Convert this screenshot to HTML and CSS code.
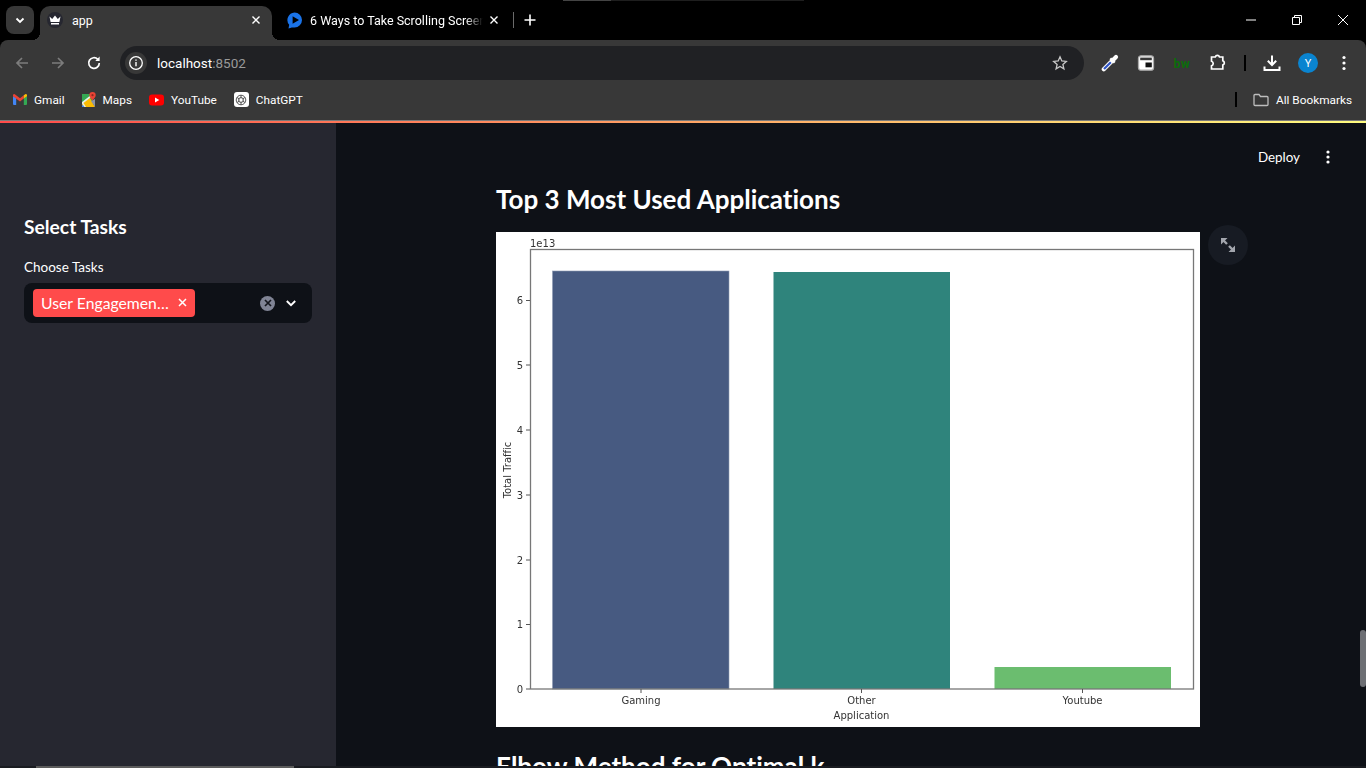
FILE: index.html
```html
<!DOCTYPE html>
<html lang="en">
<head>
    <meta charset="UTF-8">
    <meta name="viewport" content="width=device-width, initial-scale=1.0">
    <title>app</title>
    <link rel="stylesheet" href="styles.css">
</head>
<body>

    <div class="top-edge"></div>

    <div class="tabstrip">
        <button class="tab-search">
            <svg width="12" height="12" viewBox="0 0 12 12"><path d="M2.5 4.5 6 8l3.5-3.5" fill="none" stroke="#fff" stroke-width="1.8"/></svg>
        </button>
        <div class="tab tab-active">
            <span class="favicon-crown">
                <svg width="12" height="10" viewBox="0 0 12 10"><path d="M0.5 1.5 3.2 4 6 0.5 8.8 4l2.7-2.5L10.4 7H1.6zM2 8h8v1.4H2z" fill="#fff"/></svg>
            </span>
            <span class="tab-title">app</span>
            <svg class="tab-close" width="10" height="10" viewBox="0 0 10 10"><path d="M1.5 1.5l7 7M8.5 1.5l-7 7" stroke="#fff" stroke-width="1.4"/></svg>
        </div>
        <div class="tab tab-other">
            <svg width="16" height="17" viewBox="0 0 16 17"><path d="M7.500 0.500a7.500 7.500 0 0 1 0 15H4.800L1.500 16.500 2.200 12.800A7.500 7.500 0 0 1 7.500 0.500z" fill="#1a73e8"/><path d="M5.600 4.200 12 8l-6.400 3.800z" fill="#000"/></svg>
            <span class="tab-title tab-title-fade">6 Ways to Take Scrolling Screenshots</span>
            <svg class="tab-close" width="10" height="10" viewBox="0 0 10 10"><path d="M1.5 1.5l7 7M8.5 1.5l-7 7" stroke="#fff" stroke-width="1.4"/></svg>
        </div>
        <span class="tab-sep"></span>
        <svg class="tab-new" width="12" height="12" viewBox="0 0 12 12"><path d="M6 0.500v11M0.500 6h11" stroke="#fff" stroke-width="1.600"/></svg>
        <div class="window-controls">
            <svg width="12" height="12" viewBox="0 0 12 12"><path d="M1 6h10" stroke="#fff" stroke-width="1"/></svg>
            <svg width="12" height="12" viewBox="0 0 12 12"><path d="M1.500 3.500h7v7h-7zM3.500 3.500v-2h7v7h-2" fill="none" stroke="#fff"/></svg>
            <svg width="12" height="12" viewBox="0 0 12 12"><path d="M1 1l10 10M11 1L1 11" stroke="#fff"/></svg>
        </div>
    </div>

    <div class="toolbar">
        <svg class="nav-icon" width="16" height="16" viewBox="0 0 16 16"><path d="M14 8H3M8 3 3 8l5 5" fill="none" stroke="#7c7c7c" stroke-width="1.700"/></svg>
        <svg class="nav-icon" width="16" height="16" viewBox="0 0 16 16"><path d="M2 8h11M8 3l5 5-5 5" fill="none" stroke="#7c7c7c" stroke-width="1.700"/></svg>
        <svg class="nav-icon" width="16" height="16" viewBox="0 0 16 16"><path d="M13.300 8a5.300 5.300 0 1 1-1.500-3.700" fill="none" stroke="#fff" stroke-width="1.700"/><path d="M13.600 1.600v4.300H9.300z" fill="#fff"/></svg>
        <div class="omnibox">
            <span class="site-info">
                <svg width="16" height="16" viewBox="0 0 16 16"><circle cx="8" cy="8" r="6.300" fill="none" stroke="#fff" stroke-width="1.300"/><path d="M8 7v4.300M8 4.400v1.400" stroke="#fff" stroke-width="1.400"/></svg>
            </span>
            <span class="url">localhost<span class="url-port">:8502</span></span>
            <svg class="star" width="16" height="16" viewBox="0 0 16 16"><path d="M8 1.800l1.800 4.200 4.500 0.400-3.400 3 1 4.400L8 11.500l-3.900 2.300 1-4.400-3.400-3 4.500-0.400z" fill="none" stroke="#c8c8c8" stroke-width="1.300"/></svg>
        </div>
        <div class="toolbar-icons">
            <svg width="18" height="18" viewBox="0 0 18 18"><path d="M2.800 15.200 10 8" stroke="#fff" stroke-width="4.200" stroke-linecap="round"/><path d="M3 15 9.800 8.200" stroke="#2f55c8" stroke-width="2.200"/><path d="M9.300 4.300l4.400 4.400" stroke="#fff" stroke-width="2.400"/><path d="M11.800 6.200 15 3" stroke="#fff" stroke-width="4.200" stroke-linecap="round"/></svg>
            <svg width="18" height="16" viewBox="0 0 18 16"><rect x="1.500" y="0.800" width="15" height="14.400" rx="2.500" fill="#fff" stroke="#aaa" stroke-width="1.300"/><rect x="3.200" y="2.600" width="11.600" height="2.600" fill="#383838"/><rect x="8.500" y="7.500" width="6.300" height="4.800" fill="#111"/></svg>
            <span class="ext-bw">bw</span>
            <svg width="18" height="18" viewBox="0 0 18 18"><path d="M2.500 3h3.800a2.200 2.200 0 0 1 4.200 0h3.300v3.800a2.200 2.200 0 0 1 0 4.200v4H2.500v-3.200a2.400 2.400 0 0 0 0-4.600z" fill="none" stroke="#fff" stroke-width="1.700"/></svg>
            <span class="toolbar-sep"></span>
            <svg width="18" height="18" viewBox="0 0 18 18"><path d="M9 1.500v9M4.800 6.800 9 11l4.200-4.200" fill="none" stroke="#fff" stroke-width="2"/><path d="M1.500 12.500v3.500h15v-3.500" fill="none" stroke="#fff" stroke-width="2"/></svg>
            <span class="avatar">Y</span>
            <svg class="toolbar-menu" width="4" height="16" viewBox="0 0 4 16"><circle cx="2" cy="2.500" r="1.600" fill="#fff"/><circle cx="2" cy="8" r="1.600" fill="#fff"/><circle cx="2" cy="13.500" r="1.600" fill="#fff"/></svg>
        </div>
    </div>

    <div class="bookmarks">
        <a class="bookmark">
            <svg width="14" height="11" viewBox="0 0 14 11"><path d="M0 2v8a1 1 0 0 0 1 1h2.200V4z" fill="#4285f4"/><path d="M14 2v8a1 1 0 0 1-1 1h-2.200V4z" fill="#34a853"/><path d="M0 1.300A1.100 1.100 0 0 1 1.800 0.300L7 4.200l3.800-2.900V4.500L7 7.400 0 2.200z" fill="#ea4335"/><path d="M10.800 1.300l1.400-1a1.100 1.100 0 0 1 1.800 1v0.900L10.800 4.500z" fill="#fbbc04"/></svg>
            Gmail
        </a>
        <a class="bookmark">
            <svg width="14" height="15" viewBox="0 0 14 15"><path d="M0 2h10v13H0z" fill="#34a853"/><path d="M0 15V11L8 6l5 9z" fill="#fbbc04"/><path d="M0 15 3 15 0 12.500z" fill="#4285f4"/><path d="M9 9l4-2v8H13z" fill="#8a94a8"/><path d="M0 10 9 3l1 1.500L1.500 11 4 15H2.500L0 11.500z" fill="#e8f0e8"/><path d="M10.500 0a3.200 3.200 0 0 1 3.200 3.200c0 2.100-2 3.500-3.200 5.300C9.300 6.700 7.300 5.300 7.300 3.200A3.200 3.200 0 0 1 10.500 0z" fill="#ea4335"/><circle cx="10.500" cy="3.200" r="1.100" fill="#8c2a20"/></svg>
            Maps
        </a>
        <a class="bookmark">
            <svg width="15" height="12" viewBox="0 0 15 12"><rect width="15" height="11" y="0.500" rx="3" fill="#f00"/><path d="M6 3.500v5L10.300 6z" fill="#fff"/></svg>
            YouTube
        </a>
        <a class="bookmark">
            <span class="gpt-icon">
                <svg width="12" height="12" viewBox="0 0 12 12" fill="none" stroke="#555" stroke-width="1"><circle cx="6" cy="6" r="4.800"/><circle cx="6" cy="6" r="2.400"/><path d="M6 1.200v3M10 3.500 7.500 5M10 8.500 7.500 7M6 10.800v-3M2 8.500 4.500 7M2 3.500 4.500 5"/></svg>
            </span>
            ChatGPT
        </a>
        <span class="bookmarks-sep"></span>
        <a class="bookmark all-bookmarks">
            <svg width="16" height="14" viewBox="0 0 16 14"><path d="M1 2.500a1 1 0 0 1 1-1h4l1.500 2H14a1 1 0 0 1 1 1V11.500a1 1 0 0 1-1 1H2a1 1 0 0 1-1-1z" fill="none" stroke="#bdbdbd" stroke-width="1.300"/></svg>
            All Bookmarks
        </a>
    </div>

    <div class="chrome-line"></div>
    <div class="decoration"></div>

    <div class="app">
        <aside class="sidebar">
            <h3 class="sidebar-title">Select Tasks</h3>
            <label class="field-label">Choose Tasks</label>
            <div class="multiselect">
                <span class="chip">
                    <span class="chip-text">User Engagemen…</span>
                    <svg width="9" height="9" viewBox="0 0 9 9"><path d="M1 1l7 7M8 1 1 8" stroke="#fff" stroke-width="1.500"/></svg>
                </span>
                <span class="clear-all">
                    <svg width="8" height="8" viewBox="0 0 8 8"><path d="M1 1l6 6M7 1 1 7" stroke="#14161d" stroke-width="1.700"/></svg>
                </span>
                <svg class="chevron" width="12" height="12" viewBox="0 0 12 12"><path d="M1.800 4 6 8.200 10.200 4" fill="none" stroke="#fff" stroke-width="1.900"/></svg>
            </div>
        </aside>

        <main class="main">
            <div class="app-header">
                <span class="deploy">Deploy</span>
                <svg width="4" height="14" viewBox="0 0 4 14"><circle cx="2" cy="2" r="1.600" fill="#fff"/><circle cx="2" cy="7" r="1.600" fill="#fff"/><circle cx="2" cy="12" r="1.600" fill="#fff"/></svg>
            </div>

            <div class="block-container">
                <h2 class="section-title">Top 3 Most Used Applications</h2>
                <div class="chart-wrap">
                    <svg class="chart" width="704" height="495" viewBox="0 0 704 495">
                        <rect width="704" height="495" fill="#fff"/>
                        <rect x="56.500" y="39" width="176.500" height="418" fill="#475a81" stroke="#8e9ab3" stroke-width=".6"/>
                        <rect x="277.500" y="40" width="176.500" height="417" fill="#2f847c"/>
                        <rect x="498.500" y="435" width="176.500" height="22" fill="#6bbd6f"/>
                        <rect x="34.500" y="17.500" width="663" height="439.500" fill="none" stroke="#777" stroke-width="1.300"/>
                        <g stroke="#555" stroke-width="1">
                            <path d="M30 457h4M30 392.500h4M30 328h4M30 263h4M30 198h4M30 133h4M30 68.500h4"/>
                            <path d="M145 457v4M365.500 457v4M586.500 457v4"/>
                        </g>
                        <g class="chart-text">
                            <text x="34" y="15">1e13</text>
                            <text x="27" y="461" text-anchor="end">0</text>
                            <text x="27" y="396" text-anchor="end">1</text>
                            <text x="27" y="332" text-anchor="end">2</text>
                            <text x="27" y="267" text-anchor="end">3</text>
                            <text x="27" y="202" text-anchor="end">4</text>
                            <text x="27" y="137" text-anchor="end">5</text>
                            <text x="27" y="72" text-anchor="end">6</text>
                            <text x="145" y="472" text-anchor="middle">Gaming</text>
                            <text x="365.500" y="472" text-anchor="middle">Other</text>
                            <text x="586.500" y="472" text-anchor="middle">Youtube</text>
                            <text x="365.500" y="486.500" text-anchor="middle">Application</text>
                            <text transform="translate(14.500 238) rotate(-90)" text-anchor="middle">Total Traffic</text>
                        </g>
                    </svg>
                    <span class="fullscreen-btn">
                        <svg width="16" height="16" viewBox="0 0 16 16"><path d="M1 1h6.500L1 7.500zM15 15H8.500L15 8.500z" fill="#a3a6ad"/><path d="M3 3l4 4M13 13 9 9" stroke="#a3a6ad" stroke-width="2.400"/></svg>
                    </span>
                </div>
                <h2 class="section-title section-title-next">Elbow Method for Optimal k</h2>
            </div>

            <div class="scrollbar-thumb"></div>
        </main>
    </div>

    <div class="bottom-edge"><span class="bottom-edge-bar"></span></div>

</body>
</html>
```

FILE: styles.css
```css
html, body {
    margin: 0;
    height: 768px;
    overflow: hidden;
    background: #000;
}
body {
    font-family: Roboto, "Liberation Sans", sans-serif;
    color: #fff;
    display: flex;
    flex-direction: column;
    position: relative;
}
svg {
    display: block;
    flex: none;
}
.top-edge {
    position: absolute;
    top: 0;
    left: 563px;
    width: 241px;
    height: 1px;
    background: linear-gradient(90deg, #444 48px, #1e1e1e 48px);
}

/* browser tabs */
.tabstrip {
    height: 40px;
    display: flex;
    align-items: center;
    padding-left: 6px;
    flex: none;
}
.tab-search {
    width: 28px;
    height: 28px;
    border: none;
    border-radius: 8px;
    background: #383838;
    display: flex;
    align-items: center;
    justify-content: center;
    padding: 0;
    margin-right: 6px;
}
.tab {
    height: 34px;
    margin-top: 6px;
    padding: 0 0 6px 7px;
    display: flex;
    align-items: center;
    font-size: 12.500px;
    gap: 8px;
    box-sizing: border-box;
}
.tab-other {
    width: 238px;
    padding-left: 15px;
    gap: 6px;
}
.tab-active {
    width: 232px;
    background: #383838;
    border-radius: 10px 10px 0 0;
    position: relative;
}
.tab-active::before,
.tab-active::after {
    content: "";
    position: absolute;
    bottom: 0;
    width: 8px;
    height: 8px;
}
.tab-active::before {
    left: -8px;
    background: radial-gradient(circle at 0 0, transparent 8px, #383838 8px);
}
.tab-active::after {
    right: -8px;
    background: radial-gradient(circle at 100% 0, transparent 8px, #383838 8px);
}
.favicon-crown {
    width: 16px;
    height: 16px;
    border-radius: 50%;
    background: #262730;
    display: flex;
    align-items: center;
    justify-content: center;
}
.tab-title {
    flex: 1;
    white-space: nowrap;
    overflow: hidden;
    padding-left: 1px;
}
.tab-title-fade {
    -webkit-mask-image: linear-gradient(90deg, #000 90%, transparent);
    mask-image: linear-gradient(90deg, #000 90%, transparent);
}
.tab-close {
    margin-right: 11px;
}
.tab-sep {
    width: 1px;
    height: 16px;
    background: #6a6a6a;
    margin-left: 3px;
}
.tab-new {
    margin-left: 10px;
}
.window-controls {
    margin-left: auto;
    display: flex;
    gap: 34px;
    padding-right: 17px;
}

/* toolbar */
.toolbar {
    height: 46px;
    background: #383838;
    border-radius: 8px 8px 0 0;
    display: flex;
    align-items: center;
    padding-left: 14px;
    flex: none;
}
.nav-icon {
    margin-right: 20px;
}
.omnibox {
    width: 964px;
    height: 34px;
    margin-left: -2px;
    background: #202124;
    border-radius: 17px;
    display: flex;
    align-items: center;
    padding: 0 16px 0 5px;
    box-sizing: border-box;
}
.site-info {
    width: 22px;
    height: 22px;
    border-radius: 50%;
    background: #383838;
    display: flex;
    align-items: center;
    justify-content: center;
    margin-right: 10px;
}
.url {
    font-size: 13.500px;
    flex: 1;
}
.url-port {
    color: #9a9a9a;
}
.toolbar-icons {
    display: flex;
    align-items: center;
    gap: 18px;
    margin-left: 17px;
}
.ext-bw {
    width: 18px;
    padding-top: 1px;
    color: #0a6e0a;
    font-weight: 700;
    font-size: 12px;
    letter-spacing: .5px;
    text-align: center;
}
.toolbar-sep {
    width: 2px;
    height: 16px;
    background: #000;
    margin: 0 -1px;
}
.avatar {
    width: 20px;
    height: 20px;
    border-radius: 50%;
    background: #0a84d0;
    font-size: 11px;
    display: flex;
    align-items: center;
    justify-content: center;
    margin-left: -1px;
}
.toolbar-menu {
    margin-left: 6px;
}

/* bookmarks */
.bookmarks {
    height: 34px;
    padding: 0 0 7px 13px;
    box-sizing: border-box;
    background: #383838;
    display: flex;
    align-items: center;
    flex: none;
    font-size: 11.800px;
}
.bookmark {
    display: flex;
    align-items: center;
    gap: 7px;
    margin-right: 17px;
}
.gpt-icon {
    width: 15px;
    height: 15px;
    border-radius: 3px;
    background: #fff;
    display: flex;
    align-items: center;
    justify-content: center;
}
.bookmarks-sep {
    width: 2px;
    height: 15px;
    background: #000;
    margin-left: auto;
    margin-right: 16px;
}
.all-bookmarks {
    margin-right: 14px;
}
.chrome-line {
    height: 1px;
    background: #7a7a7a;
    flex: none;
}
.decoration {
    height: 2px;
    background: linear-gradient(90deg, #ff4b4b, #fffd80);
    flex: none;
}

/* streamlit app */
.app {
    flex: 1;
    display: flex;
    min-height: 0;
    font-family: Lato, "Noto Sans", sans-serif;
    font-variant-ligatures: none;
}
.sidebar {
    width: 336px;
    background: #262730;
    padding: 92px 24px 0;
    box-sizing: border-box;
    flex: none;
}
.sidebar-title {
    margin: 0 0 19px;
    font-size: 19.250px;
    font-weight: 700;
    line-height: 24px;
}
.field-label {
    display: block;
    font-size: 13.500px;
    line-height: 18px;
    margin-bottom: 7px;
}
.multiselect {
    height: 40px;
    background: #0e1117;
    border-radius: 8px;
    display: flex;
    align-items: center;
    padding: 0 15px 0 9px;
}
.chip {
    height: 28px;
    width: 162px;
    box-sizing: border-box;
    background: #ff4b4b;
    border-radius: 4px;
    display: flex;
    align-items: center;
    justify-content: space-between;
    padding: 0 8px 1px;
    font-size: 15.750px;
}
.clear-all {
    width: 15px;
    height: 15px;
    border-radius: 50%;
    background: #808495;
    margin-left: auto;
    margin-right: 10px;
    display: flex;
    align-items: center;
    justify-content: center;
}
.main {
    flex: 1;
    background: #0e1117;
    position: relative;
    overflow: hidden;
}
.app-header {
    position: absolute;
    top: 26px;
    right: 36px;
    display: flex;
    align-items: center;
    gap: 26px;
    font-size: 13.400px;
}
.block-container {
    width: 704px;
    margin-left: 160px;
    padding-top: 58px;
}
.section-title {
    margin: 0;
    font-size: 26px;
    line-height: 36px;
    font-weight: 700;
    white-space: nowrap;
}
.section-title-next {
    margin-top: 21px;
}
.chart-wrap {
    position: relative;
    margin-top: 15px;
    width: 704px;
}
.chart {
    filter: blur(.3px);
}
.chart-text {
    font-family: "DejaVu Sans", sans-serif;
    font-size: 10px;
    fill: #333;
}
.fullscreen-btn {
    position: absolute;
    top: -7px;
    right: -48px;
    width: 40px;
    height: 40px;
    border-radius: 50%;
    background: #171b23;
    display: flex;
    align-items: center;
    justify-content: center;
}
.scrollbar-thumb {
    position: absolute;
    right: 0;
    top: 507px;
    width: 6px;
    height: 57px;
    border-radius: 3px;
    background: #6d6f74;
}
.bottom-edge {
    position: absolute;
    left: 0;
    right: 0;
    bottom: 0;
    height: 2px;
    background: #1a1c21;
}
.bottom-edge-bar {
    display: block;
    margin-left: 36px;
    width: 258px;
    height: 2px;
    background: #5c5c5c;
}
```
